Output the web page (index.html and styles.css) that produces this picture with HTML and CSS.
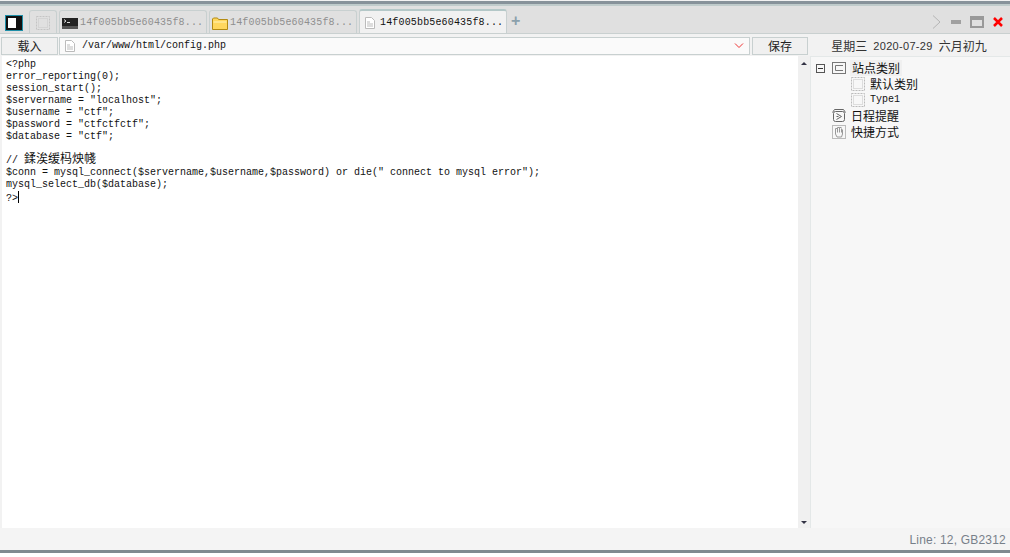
FILE: index.html
```html
<!DOCTYPE html>
<html lang="zh">
<head>
<meta charset="utf-8">
<title>config.php</title>
<link rel="stylesheet" href="styles.css">
</head>
<body>
<div class="app">
  <header class="tabbar">
    <svg class="toggle" width="18" height="16" viewBox="0 0 18 16"><rect width="18" height="16" fill="#1f8fa8"/><rect x="1" y="1" width="16" height="14" fill="#111"/><rect x="3" y="3" width="8" height="10" fill="#fff"/></svg>
    <div class="tab tab-blank"><svg width="14" height="14" viewBox="0 0 14 14"><rect x="0.5" y="0.5" width="13" height="13" fill="none" stroke="#c4c4c4" stroke-dasharray="2 1"/><rect x="2.5" y="2.5" width="9" height="9" fill="none" stroke="#d4d4d4"/></svg></div>
    <div class="tab">
      <svg width="16" height="11" viewBox="0 0 16 11"><rect width="16" height="11" fill="#222"/><rect y="8" width="16" height="3" fill="#555"/><path d="M2 1.500l2 1.500-2 1.500M5 4.500h3" stroke="#ddd" fill="none"/></svg>
      <span class="tab-label">14f005bb5e60435f8...</span>
    </div>
    <div class="tab">
      <svg width="16" height="13" viewBox="0 0 16 13"><path d="M.5 12.500V2L1.500 1h4l1 1.500h9v10z" fill="#ffd75e" stroke="#b38a12"/><path d="M1.500 5h13" stroke="#fff3b8"/></svg>
      <span class="tab-label">14f005bb5e60435f8...</span>
    </div>
    <div class="tab tab-active">
      <svg width="10" height="12" viewBox="0 0 10 12"><path d="M.5.500h6l3 3v8h-9z" fill="#fff" stroke="#bbb"/><path d="M2 5h3M2 7h6M2 9h6" stroke="#bbb"/></svg>
      <span class="tab-label">14f005bb5e60435f8...</span>
    </div>
    <span class="tab-add">+</span>
    <div class="win-controls">
      <svg width="10" height="14" viewBox="0 0 10 14"><path d="M1 0.500l7 6.500-7 6.500" fill="none" stroke="#b4b4b4"/></svg>
      <svg width="10" height="4" viewBox="0 0 10 4"><rect width="10" height="4" fill="#a0a0a0"/></svg>
      <svg width="14" height="12" viewBox="0 0 14 12"><rect x="1" y="1" width="12" height="10" fill="none" stroke="#999" stroke-width="2"/><rect x="2" y="2" width="10" height="2" fill="#999"/></svg>
      <svg width="10" height="10" viewBox="0 0 10 10"><path d="M1 1l8 8M9 1l-8 8" stroke="#f00" stroke-width="2.500"/></svg>
    </div>
  </header>
  <div class="toolbar">
    <button class="btn btn-load">载入</button>
    <div class="address">
      <svg width="10" height="12" viewBox="0 0 10 12"><path d="M.5.500h6l3 3v8h-9z" fill="#fff" stroke="#bbb"/><path d="M2 5h3M2 7h6M2 9h6" stroke="#bbb"/></svg>
      <span class="path">/var/www/html/config.php</span>
      <svg class="chevron" width="10" height="6" viewBox="0 0 10 6"><path d="M1 .500l4 4 4-4" fill="none" stroke="#e33"/></svg>
    </div>
    <button class="btn btn-save">保存</button>
    <div class="date"><span>星期三</span><span class="date-num">2020-07-29</span><span>六月初九</span></div>
  </div>
  <main class="main">
    <pre class="editor">&lt;?php
error_reporting(0);
session_start();
$servername = "localhost";
$username = "ctf";
$password = "ctfctfctf";
$database = "ctf";

// <span class="cjk">鍒涘缓杩炴帴</span>
$conn = mysql_connect($servername,$username,$password) or die(" connect to mysql error");
mysql_select_db($database);
?&gt;<span class="caret"></span></pre>
    <div class="scrollbar"><span class="arrow-up"></span><span class="arrow-down"></span></div>
    <nav class="tree">
      <div class="node">
        <span class="expander"></span>
        <svg width="14" height="12" viewBox="0 0 14 12"><rect x=".5" y=".5" width="13" height="11" fill="none" stroke="#777"/><path d="M11 3.500H3.500v5H11" fill="none" stroke="#777"/></svg>
        <span class="node-label selected">站点类别</span>
      </div>
      <div class="node child">
        <svg width="14" height="14" viewBox="0 0 14 14"><rect x=".5" y=".5" width="13" height="13" fill="none" stroke="#bbb" stroke-dasharray="2 1"/><rect x="2.500" y="2.500" width="9" height="9" fill="none" stroke="#ddd"/></svg>
        <span class="node-label">默认类别</span>
      </div>
      <div class="node child">
        <svg width="14" height="14" viewBox="0 0 14 14"><rect x=".5" y=".5" width="13" height="13" fill="none" stroke="#bbb" stroke-dasharray="2 1"/><rect x="2.500" y="2.500" width="9" height="9" fill="none" stroke="#ddd"/></svg>
        <span class="node-label mono">Type1</span>
      </div>
      <div class="node">
        <svg width="14" height="14" viewBox="0 0 14 14"><rect x="1.500" y="2.500" width="11" height="10" rx="2" fill="none" stroke="#666"/><path d="M.5 3.500L2.500.5h9l2 3" fill="none" stroke="#666"/><path d="M4.500 4.500l5 3-5 3M4.500 7.500h2" fill="none" stroke="#666"/></svg>
        <span class="node-label">日程提醒</span>
      </div>
      <div class="node">
        <svg width="14" height="14" viewBox="0 0 14 14"><rect x=".5" y=".5" width="13" height="13" fill="none" stroke="#bbb"/><path d="M3.500 3.500v5.500l1.500 3h4.500l1-3V4.500M5.500 7.500v-5M7.500 7.500v-5M9.500 7.500v-4M3.500 3.500h2M5.500 2.500h2M7.500 2.500h2" fill="none" stroke="#999"/></svg>
        <span class="node-label">快捷方式</span>
      </div>
    </nav>
  </main>
  <footer class="status">Line: 12, GB2312</footer>
</div>
</body>
</html>
```

FILE: styles.css
```css
* { box-sizing: border-box; }
html, body { margin: 0; height: 100%; background: #fff; overflow: hidden; }
body { font: 12px/12px "Noto Sans CJK SC", sans-serif; color: #111; }

.app {
  width: 1010px;
  height: 553px;
  display: flex;
  flex-direction: column;
  border-top: 1px solid #f2f2f2;
  border-bottom: 3px solid #7f8a90;
}

.tabbar {
  height: 33px;
  flex: none;
  display: flex;
  align-items: flex-end;
  padding-left: 5px;
  background: #e0e0e0;
  border-top: 3px solid #87929a;
  border-bottom: 1px solid #c9d0d0;
  box-shadow: inset 0 2px 0 #bfcbcb;
}
.toggle { flex: none; margin: 0 6px 2px 0; }

.tab {
  width: 148px;
  height: 23px;
  margin-right: 2px;
  padding: 2px 0 0 2px;
  display: flex;
  align-items: center;
  gap: 1px;
  border: 1px solid #c8d0d0;
  border-bottom: 0;
  border-radius: 3px 3px 0 0;
}
.tab svg { flex: none; }
.tab-blank { width: 28px; padding: 2px 0 0 6px; }
.tab-label {
  font: 10px/12px "Liberation Mono", monospace;
  letter-spacing: .16px;
  color: #8f8f8f;
  white-space: nowrap;
  margin-left: 1px;
}
.tab-active {
  height: 24px;
  background: #f1f1f1;
  border-top: 2px solid #b4c8c8;
  padding-left: 5px;
  gap: 4px;
}
.tab-active .tab-label { color: #111; }
.tab-add {
  margin: 0 0 2px 2px;
  font: bold 16px/20px "Liberation Sans", sans-serif;
  color: #8ba0ac;
}

.win-controls {
  margin-left: auto;
  padding: 0 7px 4px 0;
  display: flex;
  align-items: center;
  gap: 9px;
}

.toolbar {
  height: 22px;
  flex: none;
  display: flex;
  align-items: center;
  background: #f2f2f2;
  padding: 2px 0 0 1px;
}
.btn {
  height: 18px;
  padding: 0;
  flex: none;
  background: #f0f0f0;
  border: 1px solid #c8d0d0;
  font: 12px/14px "Noto Sans CJK SC", sans-serif;
  color: #222;
}
.btn-load { width: 57px; margin-right: 1px; }
.btn-save { width: 56px; margin-left: 2px; }

.address {
  flex: 1;
  height: 18px;
  display: flex;
  align-items: center;
  gap: 7px;
  padding: 0 5px;
  background: #fafafa;
  border: 1px solid #c8d0d0;
}
.path { font: 10px/12px "Liberation Mono", monospace; color: #111; }
.chevron { margin-left: auto; }

.date {
  width: 202px;
  flex: none;
  display: flex;
  justify-content: center;
  align-items: center;
  gap: 6px;
  color: #333;
}
.date-num { font: 11px/12px "Liberation Sans", sans-serif; letter-spacing: .3px; }

.main { flex: 1; min-height: 0; display: flex; }

.editor {
  flex: 1;
  margin: 0;
  padding: 3px 0 0 4px;
  background: #fff;
  border-left: 2px solid #f2f2f2;
  font: 10px/12px "Liberation Mono", monospace;
  color: #111;
  overflow: hidden;
}
.cjk { font: 12px/0 "Noto Sans CJK SC", sans-serif; }
.caret { display: inline-block; width: 1px; height: 12px; background: #000; vertical-align: -2px; }

.scrollbar {
  width: 12px;
  flex: none;
  background: #f0f0f0;
  display: flex;
  flex-direction: column;
  justify-content: space-between;
  align-items: center;
  padding: 6px 0 4px;
}
.arrow-up { border: 3px solid transparent; border-top: 0; border-bottom: 3px solid #334; }
.arrow-down { border: 3px solid transparent; border-bottom: 0; border-top: 3px solid #334; }

.tree {
  width: 200px;
  flex: none;
  background: #f7f7f7;
  border-left: 1px solid #e4e8e8;
  border-top: 1px solid #e4e8e8;
  padding: 3px 0 0 5px;
}
.node { height: 16px; display: flex; align-items: center; gap: 5px; padding-left: 16px; color: #111; }
.node svg { flex: none; }
.node:first-child { padding-left: 0; }
.child { padding-left: 35px; }
.node-label { padding: 0 2px 0 0; }
.mono { font: 10px/12px "Liberation Mono", monospace; }
.selected { background: #f0f0f0; line-height: 16px; padding: 0 2px; margin-left: -1px; }
.expander {
  width: 9px;
  height: 9px;
  margin-right: 2px;
  border: 1px solid #555;
  background: linear-gradient(#333, #333) center / 5px 1px no-repeat;
}

.status {
  height: 22px;
  flex: none;
  background: #f4f4f4;
  padding-right: 4px;
  text-align: right;
  font: 12px/24px "Liberation Sans", sans-serif;
  letter-spacing: .2px;
  color: #77808a;
}
```
